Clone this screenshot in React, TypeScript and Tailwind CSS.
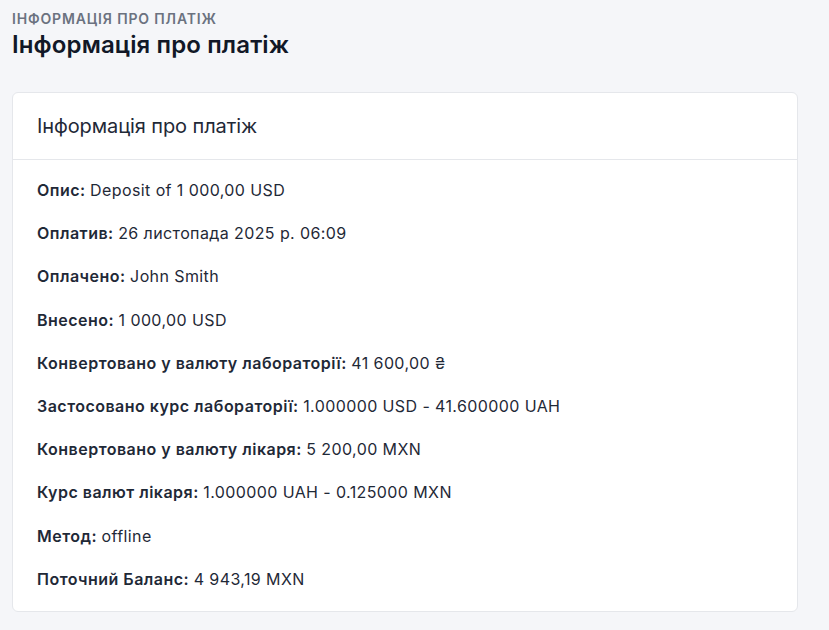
const ROWS: [string, string][] = [
  ['Опис:', 'Deposit of 1 000,00 USD'],
  ['Оплатив:', '26 листопада 2025 р. 06:09'],
  ['Оплачено:', 'John Smith'],
  ['Внесено:', '1 000,00 USD'],
  ['Конвертовано у валюту лабораторії:', '41 600,00 ₴'],
  ['Застосовано курс лабораторії:', '1.000000 USD - 41.600000 UAH'],
  ['Конвертовано у валюту лікаря:', '5 200,00 MXN'],
  ['Курс валют лікаря:', '1.000000 UAH - 0.125000 MXN'],
  ['Метод:', 'offline'],
  ['Поточний Баланс:', '4 943,19 MXN'],
]

export default function App() {
  return (
    <div className="min-h-screen bg-[#f5f6f9] font-['Inter',sans-serif] text-[#1f2937] pl-3 pr-[31px] pt-[11px] pb-4">
      <p className="text-[14px] font-semibold uppercase tracking-[0.06em] text-[#6b7280] leading-4">
        Інформація про платіж
      </p>
      <h1 className="text-[24px] font-semibold text-[#111827] leading-8 mt-[2px] tracking-[0.005em]">
        Інформація про платіж
      </h1>

      <div className="mt-[31px] bg-white border border-[#e5e7eb] rounded-md">
        <div className="px-6 h-[67px] flex items-center border-b border-[#e5e7eb]">
          <h2 className="text-[20px] text-[#1f2937] tracking-[-0.005em]">Інформація про платіж</h2>
        </div>
        <div className="px-6 pt-[18px] pb-[20px] flex flex-col gap-[19.2px]">
          {ROWS.map(([label, value]) => (
            <p key={label} className="text-[16px] leading-6 text-[#1f2937]">
              <span className="font-semibold tracking-[0.03em]">{label}</span>{' '}
              <span className="tracking-[0.025em]">{value}</span>
            </p>
          ))}
        </div>
      </div>
    </div>
  )
}
